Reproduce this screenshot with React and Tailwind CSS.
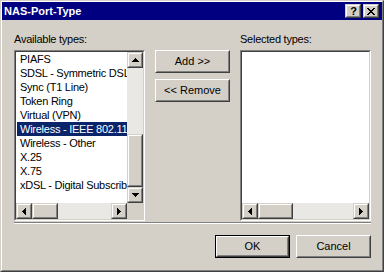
const ITEMS = [
  'PIAFS',
  'SDSL - Symmetric DSL',
  'Sync (T1 Line)',
  'Token Ring',
  'Virtual (VPN)',
  'Wireless - IEEE 802.11',
  'Wireless - Other',
  'X.25',
  'X.75',
  'xDSL - Digital Subscriber Line',
];

const SELECTED = 'Wireless - IEEE 802.11';

// 1px rows of a classic arrow glyph, drawn crisp
function Arrow({ dir }) {
  const rows = [
    [3, 1],
    [2, 3],
    [1, 5],
    [0, 7],
  ];
  const flip = dir === 'down' || dir === 'right';
  const horiz = dir === 'left' || dir === 'right';
  return (
    <svg width={horiz ? 4 : 7} height={horiz ? 7 : 4} shapeRendering="crispEdges">
      {rows.map(([off, len], i) => {
        const r = flip ? 3 - i : i;
        return horiz ? (
          <rect key={i} x={r} y={off} width="1" height={len} fill="#000" />
        ) : (
          <rect key={i} x={off} y={r} width={len} height="1" fill="#000" />
        );
      })}
    </svg>
  );
}

function ScrollBtn({ dir }) {
  return (
    <div className="w-[16px] h-[16px] shrink-0 border border-t-[#d4d0c8] border-l-[#d4d0c8] border-r-[#404040] border-b-[#404040]">
      <div className="w-full h-full border border-t-white border-l-white border-r-[#808080] border-b-[#808080] bg-[#d4d0c8] flex items-center justify-center">
        <Arrow dir={dir} />
      </div>
    </div>
  );
}

function Thumb({ className }) {
  return (
    <div className={`shrink-0 border border-t-[#d4d0c8] border-l-[#d4d0c8] border-r-[#404040] border-b-[#404040] ${className}`}>
      <div className="w-full h-full border border-t-white border-l-white border-r-[#808080] border-b-[#808080] bg-[#d4d0c8]" />
    </div>
  );
}

function PushButton({ children, isDefault }) {
  const inner = (
    <div className="w-full h-full border border-t-white border-l-white border-r-[#404040] border-b-[#404040]">
      <div className="w-full h-full border border-t-[#d4d0c8] border-l-[#d4d0c8] border-r-[#808080] border-b-[#808080] bg-[#d4d0c8] flex items-center justify-center text-black">
        {children}
      </div>
    </div>
  );
  return (
    <div className={`w-[75px] h-[23px] shrink-0 ${isDefault ? 'border border-black' : ''}`}>
      {inner}
    </div>
  );
}

function Sunken({ children }) {
  return (
    <div className="w-[131px] h-[171px] border border-t-[#808080] border-l-[#808080] border-r-white border-b-white">
      <div className="w-full h-full border border-t-[#404040] border-l-[#404040] border-r-[#d4d0c8] border-b-[#d4d0c8] bg-white flex flex-col">
        {children}
      </div>
    </div>
  );
}

function HScroll({ thumb }) {
  return (
    <div className="flex h-[16px] flex-1">
      <ScrollBtn dir="left" />
      <Thumb className={thumb} />
      <div className="flex-1 bg-[#eae8e4]" />
      <ScrollBtn dir="right" />
    </div>
  );
}

export default function App() {
  return (
    <div className="w-[384px] h-[272px] bg-[#d4d0c8] border border-t-[#d4d0c8] border-l-[#d4d0c8] border-r-[#404040] border-b-[#404040] font-['Liberation_Sans',Arial,sans-serif] text-[11px] text-black select-none">
      <div className="w-full h-full flex flex-col border border-t-white border-l-white border-r-[#808080] border-b-[#808080]">
        {/* Title bar */}
        <div className="h-[18px] bg-[#000080] flex items-center justify-between pl-[2px] pr-[3px]">
          <span className="text-white font-bold leading-[18px]">NAS-Port-Type</span>
          <div className="flex gap-[2px]">
            <div className="w-[16px] h-[14px] border border-t-[#d4d0c8] border-l-[#d4d0c8] border-r-[#404040] border-b-[#404040]">
              <div className="w-full h-full border border-t-white border-l-white border-r-[#808080] border-b-[#808080] bg-[#d4d0c8] flex items-center justify-center font-bold text-[11px] leading-none pl-[1px]">
                ?
              </div>
            </div>
            <div className="w-[16px] h-[14px] border border-t-[#d4d0c8] border-l-[#d4d0c8] border-r-[#404040] border-b-[#404040]">
              <div className="w-full h-full border border-t-white border-l-white border-r-[#808080] border-b-[#808080] bg-[#d4d0c8] flex items-center justify-center">
                <svg width="8" height="7" shapeRendering="crispEdges">
                  {[0, 1, 2, 3, 4, 5, 6].map((i) => (
                    <g key={i} fill="#000">
                      <rect x={i < 4 ? i : i + 0} y={i} width="2" height="1" />
                      <rect x={6 - i} y={i} width="2" height="1" />
                    </g>
                  ))}
                </svg>
              </div>
            </div>
          </div>
        </div>

        {/* Body */}
        <div className="flex-1 flex flex-col pl-[12px] pr-[11px] pt-[13px]">
          <div className="flex gap-[10px]">
            {/* Available */}
            <div className="flex flex-col">
              <div className="h-[13px] leading-[13px] tracking-[-0.25px] mb-[4px]">Available types:</div>
              <Sunken>
                <div className="flex flex-1 min-h-0">
                  <div className="flex-1 min-w-0 overflow-hidden pl-[1px]">
                    {ITEMS.map((item) => (
                      <div
                        key={item}
                        className={`h-[14px] leading-[14px] pl-[3px] whitespace-nowrap tracking-[-0.25px] ${
                          item === SELECTED ? 'bg-[#0a246a] text-white' : ''
                        }`}
                      >
                        {item}
                      </div>
                    ))}
                  </div>
                  <div className="w-[16px] flex flex-col">
                    <ScrollBtn dir="up" />
                    <div className="h-[66px] bg-[#eae8e4]" />
                    <Thumb className="flex-1" />
                    <ScrollBtn dir="down" />
                  </div>
                </div>
                <div className="flex">
                  <HScroll thumb="w-[26px]" />
                  <div className="w-[16px] h-[16px] bg-[#d4d0c8]" />
                </div>
              </Sunken>
            </div>

            {/* Add / Remove */}
            <div className="flex flex-col gap-[6px] pt-[17px]">
              <PushButton>Add &gt;&gt;</PushButton>
              <PushButton>&lt;&lt; Remove</PushButton>
            </div>

            {/* Selected */}
            <div className="flex flex-col">
              <div className="h-[13px] leading-[13px] tracking-[-0.25px] mb-[4px]">Selected types:</div>
              <Sunken>
                <div className="flex-1" />
                <div className="flex">
                  <HScroll thumb="w-[35px]" />
                </div>
              </Sunken>
            </div>
          </div>

          {/* Separator */}
          <div className="mt-[1px] h-[2px] border-t border-t-[#808080] border-b border-b-white" />

          {/* OK / Cancel */}
          <div className="flex justify-end gap-[6px] mt-[11px]">
            <PushButton isDefault>OK</PushButton>
            <PushButton>Cancel</PushButton>
          </div>
        </div>
      </div>
    </div>
  );
}
